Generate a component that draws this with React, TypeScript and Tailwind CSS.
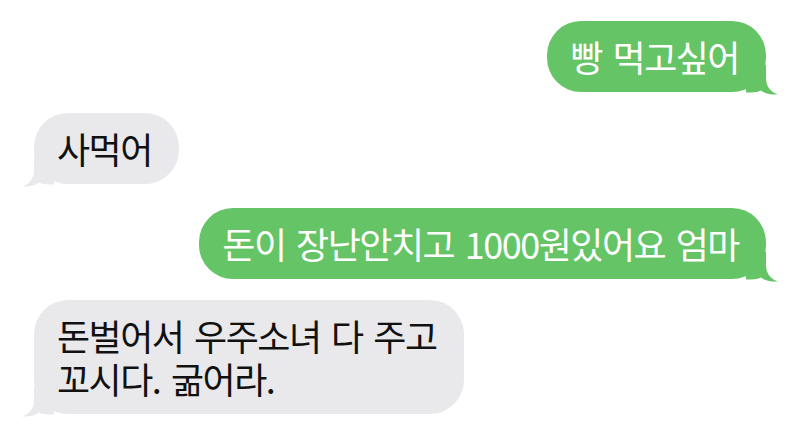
import React from 'react';

type BubbleProps = {
  side: 'left' | 'right';
  children: React.ReactNode;
  className?: string;
};

const GREEN = '#65c466';
const GRAY = '#e9e9eb';

function Tail({ side }: { side: 'left' | 'right' }) {
  if (side === 'right') {
    return (
      <svg
        className="absolute right-[-12px] bottom-[-3px]"
        width="32"
        height="30"
        viewBox="0 0 32 30">
        <path
          d="M4 0 L20 0 L20 13 C20 22 25 27 32 29.5 C25 30 19 28.5 15 25.5 C11 27.5 6 27.5 0 27.5 L0 0 Z"
          fill={GREEN}
        />
      </svg>
    );
  }
  return (
    <svg
      className="absolute left-[-12px] bottom-[-3px]"
      width="32"
      height="30"
      viewBox="0 0 32 30">
      <path
        d="M28 0 L12 0 L12 13 C12 22 7 27 0 29.5 C7 30 13 28.5 17 25.5 C21 27.5 26 27.5 32 27.5 L32 0 Z"
        fill={GRAY}
      />
    </svg>
  );
}

function Bubble({ side, children, className }: BubbleProps) {
  const isRight = side === 'right';
  return (
    <div className={`flex ${isRight ? 'justify-end' : 'justify-start'}`}>
      <div
        className={`relative rounded-[34px] pl-[23px] pr-[27px] py-[14px] text-[36px] leading-[43px] tracking-[-1.5px] [word-spacing:4px] ${
          isRight ? 'bg-[#65c466] text-white' : 'bg-[#e9e9eb] text-[#111111]'
        } ${className ?? ''}`}>
        <Tail side={side} />
        <div className="relative">{children}</div>
      </div>
    </div>
  );
}

export default function App() {
  return (
    <div
      className="w-[800px] h-[435px] bg-white overflow-hidden px-[34px] pt-[21px] flex flex-col"
      style={{ fontFamily: '"Noto Sans CJK KR", "Noto Sans", sans-serif' }}>
      <Bubble side="right">빵 먹고싶어</Bubble>
      <Bubble side="left" className="mt-[21px]">
        사먹어
      </Bubble>
      <Bubble side="right" className="mt-[24px]">
        돈이 장난안치고 1000원있어요 엄마
      </Bubble>
      <Bubble side="left" className="mt-[21px]">
        <p>돈벌어서 우주소녀 다 주고</p>
        <p>꼬시다. 굶어라.</p>
      </Bubble>
    </div>
  );
}
